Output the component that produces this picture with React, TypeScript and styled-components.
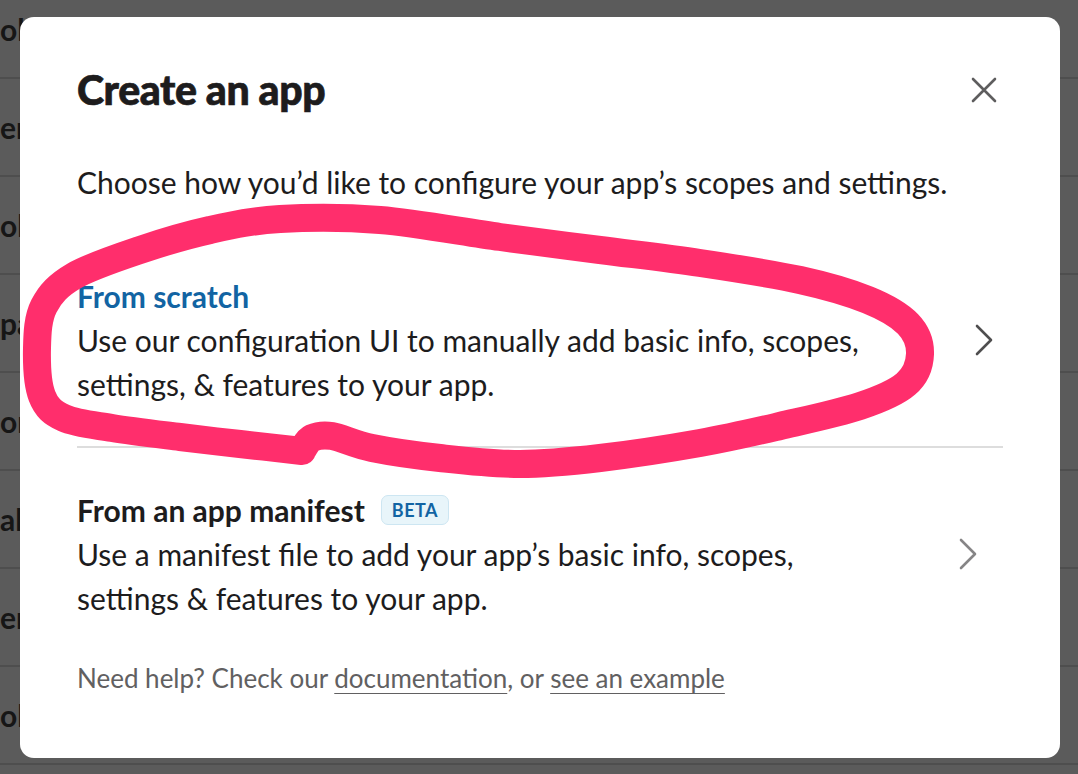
import React from "react";
import styled, { createGlobalStyle } from "styled-components";

const GlobalStyle = createGlobalStyle`
  html, body {
    margin: 0;
    padding: 0;
    overflow: hidden;
  }
  body {
    font-family: Lato, "Open Sans", "Liberation Sans", sans-serif;
  }
`;

const Page = styled.div`
  position: relative;
  width: 1078px;
  height: 774px;
  overflow: hidden;
  background: #5b5b5b;
`;

const BackList = styled.div`
  display: flex;
  flex-direction: column;
  margin-top: -19px;
`;

const BackRow = styled.div<{ $shift: number }>`
  display: flex;
  align-items: center;
  height: 96px;
  border-bottom: 2px solid #4e4e4e;
  padding-left: ${(p) => p.$shift}px;
  font-size: 30px;
  font-weight: 700;
  color: #161616;
  white-space: nowrap;
`;

const Modal = styled.div`
  position: absolute;
  left: 20px;
  top: 17px;
  width: 1040px;
  height: 741px;
  box-sizing: border-box;
  padding: 50px 57px 61px;
  background: #ffffff;
  border-radius: 14px;
  display: flex;
  flex-direction: column;
  color: #1d1c1d;
`;

const Header = styled.div`
  display: flex;
  align-items: center;
  justify-content: space-between;
  height: 46px;
`;

const Title = styled.h1`
  margin: 0;
  font-size: 41px;
  font-weight: 900;
  letter-spacing: -0.4px;
  line-height: 46px;
  -webkit-text-stroke: 0.7px #1d1c1d;
`;

const CloseButton = styled.button`
  display: flex;
  align-items: center;
  justify-content: center;
  width: 40px;
  height: 40px;
  margin-right: -1px;
  padding: 0;
  border: none;
  background: none;
  color: #5e5d5e;
`;

const Intro = styled.p`
  margin: 47px 0 0;
  font-size: 30px;
  line-height: 44px;
`;

const Options = styled.div`
  display: flex;
  flex-direction: column;
  margin-top: 30px;
`;

const Option = styled.div<{ $divider?: boolean }>`
  display: flex;
  align-items: center;
  justify-content: space-between;
  padding: 40px 0;
  border-bottom: ${(p) => (p.$divider ? "2px solid #dddddd" : "none")};
`;

const OptionText = styled.div`
  display: flex;
  flex-direction: column;
`;

const OptionTitle = styled.div<{ $accent?: boolean }>`
  display: flex;
  align-items: center;
  gap: 16px;
  font-size: 30px;
  font-weight: 700;
  line-height: 44px;
  color: ${(p) => (p.$accent ? "#1264a3" : "#1d1c1d")};
`;

const OptionDesc = styled.div`
  font-size: 30px;
  line-height: 44px;
  max-width: 820px;
`;

const Badge = styled.span`
  display: inline-flex;
  align-items: center;
  height: 28px;
  padding: 0 10px;
  border: 1px solid #cde6f2;
  border-radius: 7px;
  background: #e8f5fa;
  color: #1264a3;
  font-size: 18px;
  font-weight: 700;
  line-height: 1;
  letter-spacing: 0.5px;
`;

const Chevron = styled.span<{ $inset: number; $tone: string }>`
  display: flex;
  margin-right: ${(p) => p.$inset}px;
  color: ${(p) => p.$tone};
`;

const Footer = styled.p`
  margin: 0;
  font-size: 26px;
  line-height: 36px;
  color: #616061;

  a {
    color: inherit;
    text-decoration: underline;
    text-underline-offset: 5px;
    text-decoration-thickness: 1px;
  }
`;

const Scribble = styled.svg`
  position: absolute;
  left: 0;
  top: 0;
  pointer-events: none;
`;

const backRows = [
  { text: "olt apps", shift: -10 },
  { text: "en", shift: -6 },
  { text: "ob", shift: -8 },
  { text: "pa", shift: -8 },
  { text: "on", shift: -8 },
  { text: "al", shift: -6 },
  { text: "en", shift: -6 },
  { text: "olt apps", shift: -10 },
];

// hand drawn loop around "From scratch", catmull-rom through the pen points
const loop: [number, number][] = [
  [302, 451], [240, 444], [180, 437], [112, 428], [64, 418], [42, 396],
  [37, 348], [44, 306], [74, 276], [140, 250], [210, 230], [280, 219],
  [380, 220], [500, 237], [600, 250], [700, 263], [800, 280], [868, 300],
  [908, 324], [920, 354], [906, 384], [860, 406], [780, 426], [700, 443],
  [600, 458], [520, 464], [440, 458], [372, 448], [332, 436], [312, 438],
  [303, 449],
];

function smoothPath(pts: [number, number][]) {
  let d = `M ${pts[0][0]} ${pts[0][1]}`;
  for (let i = 0; i < pts.length - 1; i++) {
    const p0 = pts[i - 1] || pts[i];
    const p1 = pts[i];
    const p2 = pts[i + 1];
    const p3 = pts[i + 2] || p2;
    const c1x = p1[0] + (p2[0] - p0[0]) / 6;
    const c1y = p1[1] + (p2[1] - p0[1]) / 6;
    const c2x = p2[0] - (p3[0] - p1[0]) / 6;
    const c2y = p2[1] - (p3[1] - p1[1]) / 6;
    d += ` C ${c1x} ${c1y} ${c2x} ${c2y} ${p2[0]} ${p2[1]}`;
  }
  return d;
}

const ChevronIcon = () => (
  <svg width="18" height="32" viewBox="0 0 18 32" fill="none">
    <path d="M2 2 L16 16 L2 30" stroke="currentColor" strokeWidth="2.6" strokeLinecap="round" strokeLinejoin="round" />
  </svg>
);

export default function App() {
  return (
    <Page>
      <GlobalStyle />
      <BackList>
        {backRows.map((r, i) => (
          <BackRow key={i} $shift={r.shift}>{r.text}</BackRow>
        ))}
      </BackList>

      <Modal>
        <Header>
          <Title>Create an app</Title>
          <CloseButton aria-label="Close">
            <svg width="26" height="26" viewBox="0 0 26 26" fill="none">
              <path d="M2 2 L24 24 M24 2 L2 24" stroke="currentColor" strokeWidth="2.6" strokeLinecap="round" />
            </svg>
          </CloseButton>
        </Header>

        <Intro>Choose how you’d like to configure your app’s scopes and settings.</Intro>

        <Options>
          <Option $divider>
            <OptionText>
              <OptionTitle $accent>From scratch</OptionTitle>
              <OptionDesc>
                Use our configuration UI to manually add basic info, scopes, settings, &amp; features to your app.
              </OptionDesc>
            </OptionText>
            <Chevron $inset={10} $tone="#4f4e4f"><ChevronIcon /></Chevron>
          </Option>
          <Option>
            <OptionText>
              <OptionTitle>
                From an app manifest <Badge>BETA</Badge>
              </OptionTitle>
              <OptionDesc>
                Use a manifest file to add your app’s basic info, scopes, settings &amp; features to your app.
              </OptionDesc>
            </OptionText>
            <Chevron $inset={26} $tone="#868586"><ChevronIcon /></Chevron>
          </Option>
        </Options>

        <Footer>
          Need help? Check our <a href="#docs">documentation</a>, or <a href="#example">see an example</a>
        </Footer>
      </Modal>

      <Scribble width="1078" height="774" viewBox="0 0 1078 774">
        <path d={smoothPath(loop)} stroke="#ff2e6c" strokeWidth="28" fill="none" strokeLinecap="round" strokeLinejoin="round" />
      </Scribble>
    </Page>
  );
}
